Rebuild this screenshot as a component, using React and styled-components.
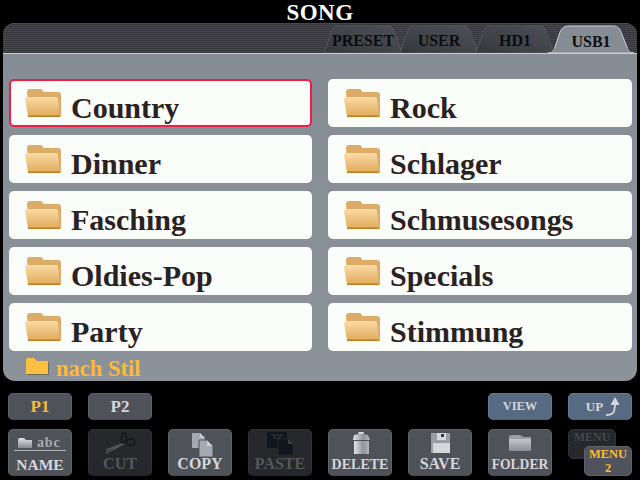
import React from "react";
import styled, { createGlobalStyle } from "styled-components";

const Global = createGlobalStyle`
  html, body {
    margin: 0;
    padding: 0;
    background: #000;
  }
  body {
    font-family: "Liberation Serif", "Times New Roman", serif;
    width: 640px;
    height: 480px;
    overflow: hidden;
  }
`;

const Screen = styled.div`
  width: 640px;
  height: 480px;
  background: #000;
  display: flex;
  flex-direction: column;
`;

const Title = styled.div`
  height: 23px;
  line-height: 26px;
  text-align: center;
  color: #fff;
  font-size: 23px;
  letter-spacing: 0.5px;
  font-weight: bold;
`;

const Panel = styled.div`
  margin: 0 3px;
  height: 358px;
  border-radius: 12px;
  overflow: hidden;
  background: linear-gradient(180deg, #858c94 0%, #8b9299 100%);
  display: flex;
  flex-direction: column;
`;

const TabBar = styled.div`
  height: 31px;
  flex: none;
  box-sizing: border-box;
  display: flex;
  justify-content: flex-end;
  align-items: flex-end;
  padding-right: 3px;
  background: repeating-linear-gradient(180deg, #47474d 0, #47474d 1px, #36363c 1px, #36363c 2px);
  border-bottom: 1px solid #c9ced2;
`;

const Tab = styled.div`
  position: relative;
  width: ${p => (p.$active ? 86 : 78)}px;
  height: ${p => (p.$active ? 29 : 28)}px;
  margin-left: ${p => (p.$active ? -6 : -2)}px;
  margin-bottom: ${p => (p.$active ? -1 : 0)}px;
  z-index: ${p => (p.$active ? 2 : 1)};
  display: flex;
  align-items: center;
  justify-content: center;
  font-size: 16px;
  font-weight: bold;
  color: #0c0c10;
  padding-top: 4px;
  box-sizing: border-box;
`;

const TabShape = styled.svg`
  position: absolute;
  inset: 0;
`;

const TabLabel = styled.span`
  position: relative;
`;

const Body = styled.div`
  flex: 1;
  padding: 25px 5px 0 6px;
  display: flex;
  flex-direction: column;
`;

const Grid = styled.div`
  display: grid;
  grid-template-columns: 303px 304px;
  grid-auto-rows: 48px;
  column-gap: 16px;
  row-gap: 8px;
`;

const Row = styled.div`
  display: flex;
  align-items: center;
  box-sizing: border-box;
  background: #fafcf9;
  border-radius: 5px;
  border: ${p => (p.$selected ? "2px solid #f01c44" : "0")};
  padding-left: ${p => (p.$selected ? 14 : 16)}px;
  color: #2a2122;
  font-size: 30px;
  font-weight: bold;
`;

const RowFolder = styled.svg`
  flex: none;
  margin-right: 10px;
`;

const RowText = styled.span`
  position: relative;
  top: 5px;
`;

const Path = styled.div`
  box-sizing: border-box;
  display: flex;
  align-items: center;
  height: 30px;
  padding: 5px 0 0 20px;
  margin-left: -3px;
  color: #fdbb35;
  font-size: 22.5px;
  font-weight: bold;
`;

const PathFolder = styled.svg`
  flex: none;
  margin: -5px 7px 0 0;
`;

const Footer = styled.div`
  margin-top: 12px;
  padding: 0 8px;
  display: grid;
  grid-template-columns: repeat(8, 64px);
  grid-template-rows: 27px 47px;
  column-gap: 16px;
  row-gap: 9px;
`;

const Button = styled.div`
  box-sizing: border-box;
  grid-column: ${p => p.$col};
  grid-row: ${p => p.$row};
  border-radius: 5px;
  display: flex;
  flex-direction: column;
  align-items: center;
  justify-content: ${p => (p.$tall ? "flex-end" : "center")};
  position: relative;
  font-weight: bold;
  font-size: ${p => p.$size || 16}px;
  line-height: 1;
  padding-bottom: ${p => (p.$tall ? 3 : 0)}px;
  color: ${p => (p.$on ? "#fdbb35" : p.$off ? "#55575b" : "#d5d7da")};
  background: ${p => (p.$off ? "#26282c" : p.$blue ? "#566b82" : "#4f5258")};
  border: 1px solid ${p => (p.$off ? "#303237" : p.$blue ? "#64798f" : "#5f6268")};
  border-bottom-color: ${p => (p.$off ? "#222428" : p.$blue ? "#4c6076" : "#46494e")};
`;

const BtnIcon = styled.svg`
  position: absolute;
  left: 0;
  top: 0;
`;

const UpRow = styled.div`
  display: flex;
  align-items: center;
  font-size: 13px;
  padding-left: 7px;
`;

const UpArrow = styled.svg`
  flex: none;
  margin-left: 2px;
`;

const MenuStack = styled.div`
  grid-column: 8;
  grid-row: 2;
  position: relative;
`;

const MenuBack = styled.div`
  box-sizing: border-box;
  width: 48px;
  height: 30px;
  border-radius: 5px;
  background: #26282c;
  border: 1px solid #303237;
  color: #45474c;
  font-size: 12px;
  font-weight: bold;
  text-align: center;
  line-height: 15px;
`;

const MenuFront = styled.div`
  position: absolute;
  left: 16px;
  top: 17px;
  box-sizing: border-box;
  width: 48px;
  height: 30px;
  border-radius: 5px;
  background: #50535c;
  border: 1px solid #5f6268;
  color: #fdbb35;
  font-size: 12.5px;
  font-weight: bold;
  text-align: center;
  line-height: 14px;
`;

const inactivePath = w => `M0 28 L7 8 C9 2 12 0 18 0 L${w - 16} 0 C${w - 10} 0 ${w - 9} 3 ${w - 7} 9 L${w} 28 Z`;
const activePath = w => `M0 28 C4 28 6 26 7 22 L12 7 C14 2 17 1 22 1 L${w - 22} 1 C${w - 17} 1 ${w - 15} 2 ${w - 13} 7 L${w - 7} 22 C${w - 6} 26 ${w - 4} 28 ${w} 28 Z`;

const TabItem = ({ label, active }) => {
  const w = active ? 86 : 78;
  const h = active ? 29 : 28;
  return (
    <Tab $active={active}>
      <TabShape width={w} height={h} viewBox={`0 0 ${w} ${h}`}>
        <defs>
          <linearGradient id={`tab${label}`} x1="0" y1="1" x2="1" y2="0">
            <stop offset="0" stopColor="#34363b" />
            <stop offset="0.3" stopColor="#3e4045" />
            <stop offset="1" stopColor="#4d5056" />
          </linearGradient>
        </defs>
        <path
          d={active ? activePath(w) : inactivePath(w)}
          fill={active ? "#858c94" : `url(#tab${label})`}
          stroke={active ? "#c9ced2" : "#55575c"}
          strokeWidth="1"
        />
      </TabShape>
      <TabLabel>{label}</TabLabel>
    </Tab>
  );
};

const FolderIcon = () => (
  <RowFolder width="36" height="28" viewBox="0 0 36 28">
    <defs>
      <linearGradient id="folderFront" x1="0" y1="0" x2="0" y2="1">
        <stop offset="0" stopColor="#fbdca6" />
        <stop offset="1" stopColor="#e0ab5c" />
      </linearGradient>
    </defs>
    <path d="M2 3 Q2 0 5 0 L15 0 Q18 0 18 3 L33 3 Q36 3 36 6 L36 27 L35 28 L4 28 Z" fill="#dcab66" />
    <path d="M0 10 Q0 8 3 8 L31 8 Q33 8 33 10 L35 27 L3 27 Z" fill="url(#folderFront)" />
    <rect x="3" y="26.5" width="32" height="1.5" fill="#b97e1e" />
  </RowFolder>
);

const ScissorsIcon = () => (
  <BtnIcon width="62" height="28" viewBox="0 0 62 28">
    <path d="M17 23 L36 13" stroke="#55575b" strokeWidth="1.5" />
    <path d="M17 20 L39 12" stroke="#55575b" strokeWidth="1.5" />
    <ellipse cx="35" cy="8" rx="2.5" ry="5" fill="none" stroke="#10161c" strokeWidth="1.6" />
    <ellipse cx="42" cy="12" rx="4" ry="3" fill="none" stroke="#10161c" strokeWidth="1.6" />
  </BtnIcon>
);

const CopyIcon = () => (
  <BtnIcon width="62" height="28" viewBox="0 0 62 28">
    <path d="M23 3 L31 3 L36 8 L36 18 L23 18 Z" fill="#a5a9b2" />
    <path d="M31 3 L36 8 L31 8 Z" fill="#e6e8ea" opacity="0.6" />
    <path d="M30 10 L38 10 L44 16 L44 27 L30 27 Z" fill="#a5a9b2" stroke="#4f5258" strokeWidth="1" />
    <path d="M38 10 L44 16 L38 16 Z" fill="#e6e8ea" opacity="0.6" />
  </BtnIcon>
);

const PasteIcon = () => (
  <BtnIcon width="62" height="28" viewBox="0 0 62 28">
    <path d="M18 2 L38 2 L38 18 L18 18 Z" fill="#10161c" />
    <path d="M22 5 L34 5 M25 5 L25 8 L31 8 L31 5" stroke="#33383e" fill="none" />
    <path d="M29 9 L39 9 L44 14 L44 25 L29 25 Z" fill="#10161c" stroke="#26282c" />
    <path d="M39 9 L44 14 L39 14 Z" fill="#3c4046" />
  </BtnIcon>
);

const TrashIcon = () => (
  <BtnIcon width="62" height="28" viewBox="0 0 62 28">
    <defs>
      <linearGradient id="trash" x1="0" y1="0" x2="1" y2="0">
        <stop offset="0" stopColor="#e4e5e8" />
        <stop offset="0.6" stopColor="#8f939a" />
        <stop offset="1" stopColor="#b4b7bc" />
      </linearGradient>
    </defs>
    <rect x="29" y="2" width="6" height="2" rx="1" fill="#d5d7da" />
    <path d="M25 5 Q32 3 39 5 L41 10 L24 10 Z" fill="url(#trash)" />
    <rect x="25" y="11" width="15" height="13" fill="url(#trash)" />
  </BtnIcon>
);

const SaveIcon = () => (
  <BtnIcon width="62" height="28" viewBox="0 0 62 28">
    <rect x="22" y="3" width="19" height="20" fill="#9a9da3" />
    <rect x="28" y="3" width="9" height="7" fill="#d5d7da" />
    <rect x="32" y="4" width="3" height="3" fill="#33353a" />
    <rect x="24" y="13" width="17" height="10" fill="#d5d7da" />
  </BtnIcon>
);

const FolderGrayIcon = () => (
  <BtnIcon width="62" height="28" viewBox="0 0 62 28">
    <defs>
      <linearGradient id="grayFolder" x1="0" y1="0" x2="0" y2="1">
        <stop offset="0" stopColor="#c2c5ca" />
        <stop offset="1" stopColor="#8c9096" />
      </linearGradient>
    </defs>
    <path d="M20 7 Q20 5 23 5 L30 5 Q33 5 34 7 L42 7 L42 21 L20 21 Z" fill="#9a9da3" />
    <path d="M20 9 L42 9 L42 21 L20 21 Z" fill="url(#grayFolder)" />
  </BtnIcon>
);

const NameIcon = () => (
  <BtnIcon width="62" height="28" viewBox="0 0 62 28">
    <defs>
      <linearGradient id="nameFolder" x1="0" y1="0" x2="0" y2="1">
        <stop offset="0" stopColor="#e2e4e6" />
        <stop offset="1" stopColor="#85898f" />
      </linearGradient>
    </defs>
    <path d="M9 10 Q9 8 11 8 L15 8 L17 10 L23 10 L23 18 L9 18 Z" fill="url(#nameFolder)" />
    <text x="28" y="17" fill="#a8abb0" fontSize="14" fontWeight="bold" fontFamily="Liberation Serif" letterSpacing="0.8">abc</text>
    <rect x="5" y="20" width="52" height="1" fill="#b0b3b8" />
  </BtnIcon>
);

const ROWS = [
  ["Country", "Rock"],
  ["Dinner", "Schlager"],
  ["Fasching", "Schmusesongs"],
  ["Oldies-Pop", "Specials"],
  ["Party", "Stimmung"]
];

const App = () => {
  return (
    <Screen>
      <Global />
      <Title>SONG</Title>
      <Panel>
        <TabBar>
          <TabItem label="PRESET" />
          <TabItem label="USER" />
          <TabItem label="HD1" />
          <TabItem label="USB1" active />
        </TabBar>
        <Body>
          <Grid>
            {ROWS.flat().map(name => (
              <Row key={name} $selected={name === "Country"}>
                <FolderIcon />
                <RowText>{name}</RowText>
              </Row>
            ))}
          </Grid>
          <Path>
            <PathFolder width="23" height="18" viewBox="0 0 23 18">
              <path d="M0 3 Q0 1 2 1 L8 1 L11 4 L22 4 L22 17 L0 17 Z" fill="#fdbf3f" />
              <path d="M22 5 L23 5 L23 18 L1 18 L1 17 L22 17 Z" fill="#6d6a5e" />
            </PathFolder>
            nach Stil
          </Path>
        </Body>
      </Panel>
      <Footer>
        <Button $col={1} $row={1} $on $size={17}>P1</Button>
        <Button $col={2} $row={1} $size={17}>P2</Button>
        <Button $col={7} $row={1} $blue $size={12.5}>VIEW</Button>
        <Button $col={8} $row={1} $blue>
          <UpRow>
            UP
            <UpArrow width="16" height="21" viewBox="0 0 16 21">
              <path d="M1 19 C8 19 10 17 10 7" fill="none" stroke="#d5d7da" strokeWidth="1.8" />
              <path d="M10 1 L14.5 9 L5.5 9 Z" fill="#d5d7da" />
            </UpArrow>
          </UpRow>
        </Button>
        <Button $col={1} $row={2} $tall $size={15.5}><NameIcon />NAME</Button>
        <Button $col={2} $row={2} $tall $off><ScissorsIcon />CUT</Button>
        <Button $col={3} $row={2} $tall><CopyIcon />COPY</Button>
        <Button $col={4} $row={2} $tall $off><PasteIcon />PASTE</Button>
        <Button $col={5} $row={2} $tall $size={14}><TrashIcon />DELETE</Button>
        <Button $col={6} $row={2} $tall><SaveIcon />SAVE</Button>
        <Button $col={7} $row={2} $tall $size={13.6}><FolderGrayIcon />FOLDER</Button>
        <MenuStack>
          <MenuBack>MENU</MenuBack>
          <MenuFront>MENU<br />2</MenuFront>
        </MenuStack>
      </Footer>
    </Screen>
  );
};

export default App;
